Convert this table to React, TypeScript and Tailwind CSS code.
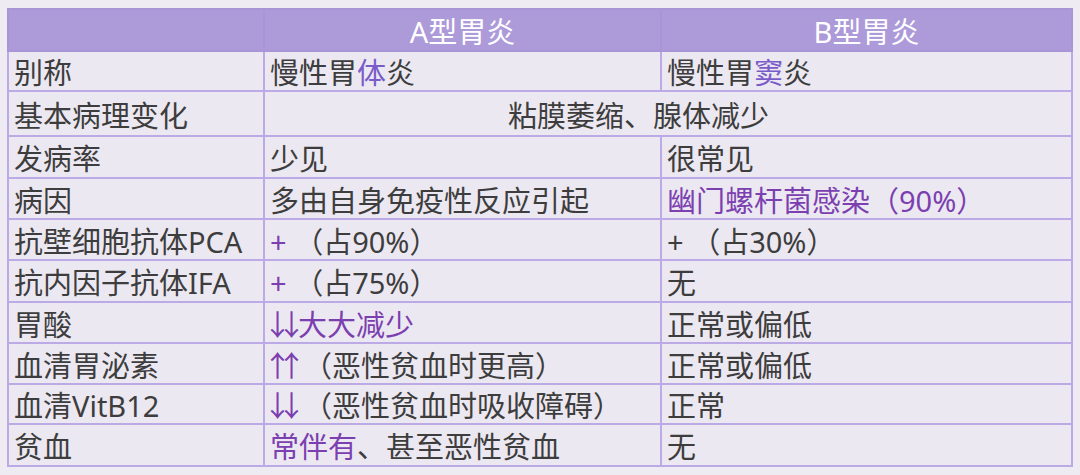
import React from "react";

type Row = { label: string; h: string; a: React.ReactNode; b?: React.ReactNode; span?: boolean };

const P = ({ children }: { children: React.ReactNode }) => <span className="text-[#7b3fb0]">{children}</span>;
const V = ({ children }: { children: React.ReactNode }) => <span className="text-[#7a5cc9]">{children}</span>;

// the CJK font draws arrows full width; pull them together
const Arrows = ({ ch, gap }: { ch: string; gap?: boolean }) => (
  <span className={`text-[#7b3fb0] tracking-[-15px] -ml-[7px] ${gap ? "mr-[12px]" : "mr-[7px]"}`}>
    {ch}
    {ch}
  </span>
);

const ROWS: Row[] = [
  { label: "别称", h: "h-[40px]", a: <>慢性胃<V>体</V>炎</>, b: <>慢性胃<V>窦</V>炎</> },
  { label: "基本病理变化", h: "h-[45px]", a: "粘膜萎缩、腺体减少", span: true },
  { label: "发病率", h: "h-[42px]", a: "少见", b: "很常见" },
  { label: "病因", h: "h-[41px]", a: "多由自身免疫性反应引起", b: <P>幽门螺杆菌感染（90%）</P> },
  { label: "抗壁细胞抗体PCA", h: "h-[41px]", a: <><P>+</P> （占90%）</>, b: "+ （占30%）" },
  { label: "抗内因子抗体IFA", h: "h-[42px]", a: <><P>+</P> （占75%）</>, b: "无" },
  { label: "胃酸", h: "h-[41px]", a: <><Arrows ch="↓" /><P>大大减少</P></>, b: "正常或偏低" },
  { label: "血清胃泌素", h: "h-[41px]", a: <><Arrows ch="↑" gap />（恶性贫血时更高）</>, b: "正常或偏低" },
  { label: "血清VitB12", h: "h-[40px]", a: <><Arrows ch="↓" gap />（恶性贫血时吸收障碍）</>, b: "正常" },
  { label: "贫血", h: "h-[42px]", a: <><P>常伴有</P>、甚至恶性贫血</>, b: "无" },
];

export default function App() {
  const cell = "border-2 border-[#bcaae6] px-[5px] pt-[3px] align-middle whitespace-nowrap";
  return (
    <div
      className="w-[1080px] h-[475px] bg-[#eeebf2] pt-[8px] pl-[7px] overflow-hidden"
      style={{ fontFamily: '"Noto Sans", "Noto Sans CJK SC", sans-serif' }}
    >
      <table className="table-fixed border-collapse w-[1064px] text-[29px] leading-none text-[#3d3d3d] bg-[#ece8f1]">
        <colgroup>
          <col className="w-[256px]" />
          <col className="w-[397px]" />
          <col className="w-[411px]" />
        </colgroup>
        <thead>
          <tr className="h-[42px] bg-[#ad9ad9] text-white">
            <th className="border-2 border-[#a895d6] font-normal" />
            <th className="border-2 border-[#a895d6] font-normal pt-[2px]">A型胃炎</th>
            <th className="border-2 border-[#a895d6] font-normal pt-[2px]">B型胃炎</th>
          </tr>
        </thead>
        <tbody>
          {ROWS.map((r) => (
            <tr key={r.label} className={r.h}>
              <td className={cell}>{r.label}</td>
              {r.span ? (
                <td colSpan={2} className={`${cell} pl-[243px]`}>
                  {r.a}
                </td>
              ) : (
                <>
                  <td className={cell}>{r.a}</td>
                  <td className={cell}>{r.b}</td>
                </>
              )}
            </tr>
          ))}
        </tbody>
      </table>
    </div>
  );
}
